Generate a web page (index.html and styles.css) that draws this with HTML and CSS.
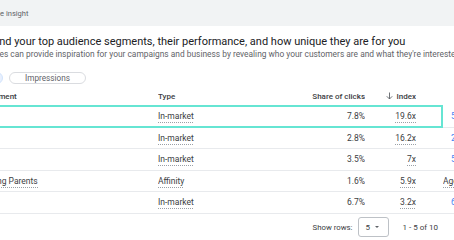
FILE: index.html
```html
<!DOCTYPE html>
<html lang="en">
<head>
  <meta charset="UTF-8">
  <meta name="viewport" content="width=device-width, initial-scale=1.0">
  <title>Audience insight</title>
  <link rel="stylesheet" href="styles.css">
</head>
<body>
<div class="band">
  <div class="band-title">Audience insight</div>
</div>

<div class="page">
  <h2 class="title">Understand your top audience segments, their performance, and how unique they are for you</h2>
  <p class="subtitle">Your audiences can provide inspiration for your campaigns and business by revealing who your customers are and what they're interested in</p>

  <div class="chips">
    <button class="chip active">Clicks</button>
    <button class="chip">Impressions</button>
  </div>

  <div class="table">
    <div class="row head">
      <div class="cell first">Audience segment</div>
      <div class="cell">Type</div>
      <div class="cell num">Share of clicks</div>
      <div class="cell num sort">
        <svg width="7" height="8" viewBox="0 0 7 8"><path d="M3.5 0.5v6.5M0.8 4.3l2.7 2.7 2.7-2.7" fill="none" stroke="#5f6368" stroke-width="0.9"/></svg>
        Index
      </div>
      <div class="cell"></div>
      <div class="cell"></div>
    </div>

    <div class="row selected">
      <div class="cell">Pet Lovers</div>
      <div class="cell"><span class="dotted">In-market</span></div>
      <div class="cell num">7.8%</div>
      <div class="cell num"><span class="dotted">19.6x</span></div>
      <div class="cell"></div>
      <div class="cell link">55-64</div>
    </div>
    <div class="row">
      <div class="cell">Baby Care</div>
      <div class="cell"><span class="dotted">In-market</span></div>
      <div class="cell num">2.8%</div>
      <div class="cell num"><span class="dotted">16.2x</span></div>
      <div class="cell"></div>
      <div class="cell link">25-34</div>
    </div>
    <div class="row">
      <div class="cell">Pet Food</div>
      <div class="cell"><span class="dotted">In-market</span></div>
      <div class="cell num">3.5%</div>
      <div class="cell num"><span class="dotted">7x</span></div>
      <div class="cell"></div>
      <div class="cell link">55-64</div>
    </div>
    <div class="row">
      <div class="cell"><span class="dotted">Busy Working Parents</span></div>
      <div class="cell"><span class="dotted">Affinity</span></div>
      <div class="cell num">1.6%</div>
      <div class="cell num"><span class="dotted">5.9x</span></div>
      <div class="cell"></div>
      <div class="cell"><span class="dotted">Age 35-44</span></div>
    </div>
    <div class="row">
      <div class="cell">Toys</div>
      <div class="cell"><span class="dotted">In-market</span></div>
      <div class="cell num">6.7%</div>
      <div class="cell num"><span class="dotted">3.2x</span></div>
      <div class="cell"></div>
      <div class="cell link">65+</div>
    </div>
  </div>

  <div class="pager">
    <span class="label">Show rows:</span>
    <div class="select">5 <span class="caret"></span></div>
    <span class="range">1 - 5 of 10</span>
  </div>
</div>
</body>
</html>
```

FILE: styles.css
```css
* {
  margin: 0;
  padding: 0;
  box-sizing: border-box;
  font-family: Roboto, 'Liberation Sans', Arial, sans-serif;
}

body {
  width: 454px;
  height: 240px;
  overflow: hidden;
  background-color: #fff;
  color: #3c4043;
}

.band {
  height: 26px;
  background-color: #f1f3f4;
  margin-left: -27px;
  display: flex;
  align-items: center;
}

.band-title {
  font-size: 7.5px;
  color: #5f6368;
}

.page {
  margin-left: -45px;
  width: 499px;
}

.title {
  font-size: 11px;
  font-weight: 400;
  line-height: 14px;
  color: #202124;
  white-space: nowrap;
  margin-top: 9px;
}

.subtitle {
  font-size: 8.4px;
  line-height: 11px;
  color: #5f6368;
  white-space: nowrap;
  text-indent: -4px;
}

.chips {
  display: flex;
  gap: 6px;
  margin-top: 12px;
  margin-left: -6px;
}

.chip {
  height: 12px;
  padding: 0 15px;
  border: 1px solid #dadce0;
  border-radius: 6px;
  background-color: #fff;
  font-size: 8.2px;
  font-weight: 400;
  line-height: 10px;
  color: #5f6368;
}

.chip.active {
  background-color: #e8f0fe;
  border-color: #d2e3fc;
  color: #1967d2;
}

.table {
  margin-top: 2px;
  width: 590px;
}

.row {
  display: grid;
  grid-template-columns: 203px 122px 85px 51px 27px 100px;
  height: 21.5px;
  align-items: center;
  border-bottom: 1px solid #e8eaed;
  font-size: 8.5px;
  color: #3c4043;
  position: relative;
}

.row.head {
  height: 20px;
  border-bottom: none;
  font-size: 8px;
  font-weight: 500;
  color: #3c4043;
}

.row.head .first {
  margin-left: -5px;
}

.row.selected::after {
  content: '';
  position: absolute;
  left: 0;
  top: -1px;
  bottom: -1px;
  width: 484px;
  border: 2px solid #66e5d3;
}

.cell {
  white-space: nowrap;
  overflow: hidden;
  padding: 2px 0;
}

.num {
  text-align: right;
}

.sort {
  display: flex;
  justify-content: flex-end;
  align-items: center;
  gap: 3px;
}

.dotted {
  padding-bottom: 2px;
  background-image: repeating-linear-gradient(to right, #9aa0a6 0 1px, transparent 1px 2px);
  background-size: 100% 1px;
  background-position: left bottom;
  background-repeat: no-repeat;
}

.link {
  color: #4285f4;
  padding-left: 8px;
}

.pager {
  display: flex;
  justify-content: flex-end;
  align-items: center;
  height: 27px;
  padding-right: 16px;
  font-size: 8px;
  color: #3c4043;
}

.label {
  font-size: 7.8px;
}

.select {
  display: flex;
  align-items: center;
  gap: 5px;
  width: 31px;
  height: 20px;
  margin-left: 5px;
  padding-left: 7px;
  border: 1px solid #bdc1c6;
  border-radius: 3px;
}

.caret {
  width: 0;
  height: 0;
  border-left: 2.5px solid transparent;
  border-right: 2.5px solid transparent;
  border-top: 2.5px solid #5f6368;
}

.range {
  margin-left: 14px;
}
```
